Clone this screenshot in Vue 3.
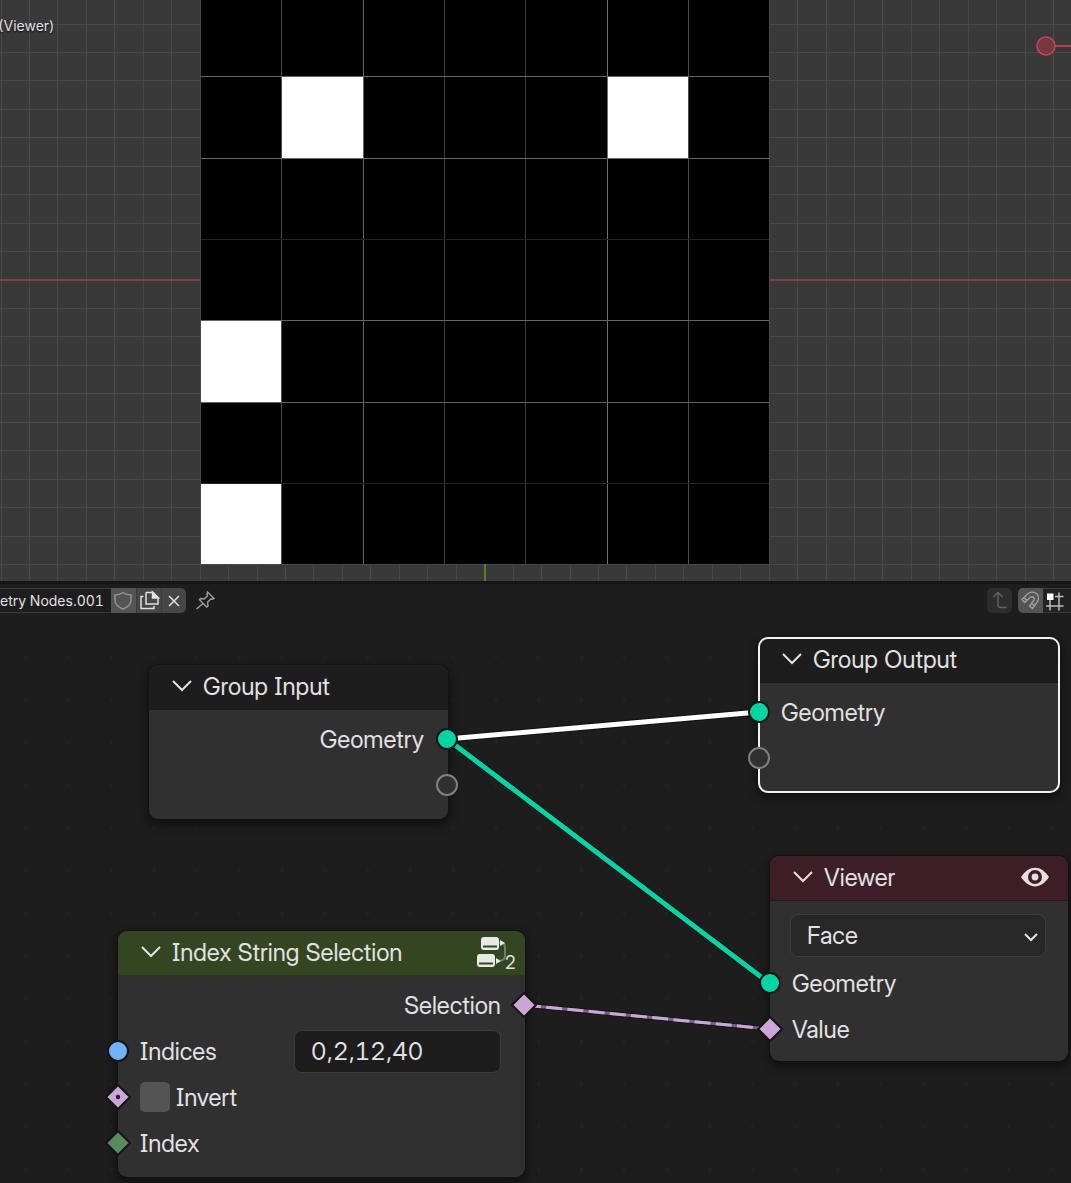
<script setup>
import { ref } from 'vue'

const treeName = ref('etry Nodes.001')
const indices = ref('0,2,12,40')
const invert = ref(false)
const domain = ref('Face')

const step = 28.45
const gridX = Array.from({ length: 70 }, (_, i) => 1 + (i - 16) * step)
const gridY = Array.from({ length: 21 }, (_, i) => 24 + i * step)

const cellX = [201, 282, 364, 445, 526, 608, 689, 769]
const cellY = [0, 77, 159, 240, 321, 403, 484, 565]
const columnLines = ['#4c4c4c', '#666', '#3c3c3c', '#3c3c3c', '#707070', '#4c4c4c']
const rowLines = ['#666', '#666', '#222', '#666', '#606060', '#222']
const selected = [[1, 1], [5, 1], [0, 4], [0, 6]]
</script>

<template>
  <main class="app">
    <section class="viewport" aria-label="3D viewport">
      <svg class="scene" viewBox="0 0 1071 581" preserveAspectRatio="xMidYMid slice" aria-hidden="true">
        <g stroke="#484848" stroke-width="1">
          <line v-for="x in gridX" :key="'x' + x" :x1="Math.floor(x) + 0.5" :x2="Math.floor(x) + 0.5" y1="0" y2="581" />
          <line v-for="y in gridY" :key="'y' + y" x1="-500" x2="1571" :y1="Math.floor(y) + 0.5" :y2="Math.floor(y) + 0.5" />
        </g>
        <path d="M-500 280H1571" stroke="#7c424a" stroke-width="2" />
        <path d="M485 560V581" stroke="#5f7c25" stroke-width="2" />
        <rect x="201" y="0" width="568" height="564" fill="#000" />
        <path v-for="(c, i) in columnLines" :key="'c' + i" :d="`M${cellX[i + 1] - 0.5} 0V564`" :stroke="c" />
        <path v-for="(c, i) in rowLines" :key="'r' + i" :d="`M201 ${cellY[i + 1] - 0.5}H769`" :stroke="c" />
        <rect
          v-for="[c, r] in selected" :key="c + '-' + r"
          :x="cellX[c]" :y="cellY[r]"
          :width="cellX[c + 1] - cellX[c] - 1" :height="cellY[r + 1] - cellY[r] - 1" fill="#fff"
        />
        <path d="M1055 46H1571" stroke="#b83f52" stroke-width="2" />
        <circle cx="1046" cy="46" r="9" fill="#743841" stroke="#c14356" stroke-width="1.6" />
      </svg>
      <p class="overlay">(Viewer)</p>
    </section>

    <section class="editor" aria-label="Node editor">
      <header class="toolbar">
        <div class="group">
          <input v-model="treeName" class="tree-name" aria-label="Node tree name" />
          <button class="tool" aria-label="Fake user">
            <svg viewBox="0 0 24 24"><path d="M12 4.500C9.500 6.500 7 7 4 7v5c0 4 3 7 8 9 5-2 8-5 8-9V7c-3 0-5.500-.5-8-2.500z" stroke="#929292" /></svg>
          </button>
          <button class="tool dim" aria-label="New node tree">
            <svg viewBox="0 0 24 24"><path d="M9 4.500h7l5 5v6.500H9V4.500" /><path d="M15.500 4v6h6z" fill="#e6e6e6" /><path d="M6.500 8.500H4V20.500h13v-2.500" /></svg>
          </button>
          <button class="tool dim last" aria-label="Unlink node tree">
            <svg viewBox="0 0 24 24"><path d="M7 8l10 10M17 8l-10 10" /></svg>
          </button>
        </div>
        <button class="bare" aria-label="Pin">
          <svg viewBox="0 0 24 24"><path d="M14.500 4l6.500 6.500-2 .8-1.200-.3-3.300 3.300.5 3.700-1.300 1L6.500 11.800l1-1.300 3.700.5 3.300-3.300-.5-1.700zM10 15.500L3.500 21" stroke="#a0a0a0" stroke-width="1.400" /></svg>
        </button>
        <div class="spacer"></div>
        <button class="parent" aria-label="Parent node tree">
          <svg viewBox="0 0 24 24"><path d="M6.500 9L11 4.500 15.500 9M11 5v11.500q0 3 3 3h5.500" stroke="#646464" stroke-width="1.400" /></svg>
        </button>
        <div class="group snap">
          <button class="tool first" aria-label="Snap">
            <svg viewBox="0 0 24 24"><path d="M4 11.500L9.500 6C13 2.500 20 4 20.500 10c0 2-.8 3.500-2 5l-4 5.500-3-2.500 4-5c2-2.500-.5-5.500-3.500-3.500L6.500 14.500zM6 9.500l2.800 3M13.500 15.500l3 2.300" stroke="#a2a2a2" stroke-width="1.300" /></svg>
          </button>
          <button class="snap-to" aria-label="Snap to grid">
            <svg viewBox="0 0 24 24"><path d="M7 11v10.500M16 3.500v18M12 7.500h8.500M3 17h17.500" stroke="#bcbcbc" stroke-width="1.500" /><path d="M4 4.500h6.500V11H4z" fill="#fff" stroke="none" /></svg>
          </button>
        </div>
      </header>

      <svg class="links" aria-hidden="true">
        <defs>
          <pattern id="dots" x="5" y="30" width="42.700" height="42.700" patternUnits="userSpaceOnUse">
            <circle cx="21.300" cy="3.300" r="1.200" fill="#242424" />
          </pattern>
        </defs>
        <rect y="40" width="100%" height="100%" fill="url(#dots)" />
        <g fill="none">
          <path d="M447 158L759 131" stroke="#111" stroke-width="7" />
          <path d="M447 158L759 131" stroke="#fff" stroke-width="5" />
          <path d="M447 158L769 402" stroke="#111" stroke-width="7" />
          <path d="M447 158L769 402" stroke="#00d6a3" stroke-width="5" />
          <path d="M524 424L769 448" stroke="#151515" stroke-width="5" />
          <path d="M524 424L769 448" stroke="#76637a" stroke-width="3" />
          <path d="M524 424L769 448" stroke="#cca6d8" stroke-width="3" stroke-dasharray="16 5.300" stroke-dashoffset="-1" />
        </g>
      </svg>

      <article class="node input-node">
        <h2><svg class="chev" viewBox="0 0 20 12"><path d="M1 1l9 9 9-9" /></svg>Group Input</h2>
        <div class="rows">
          <div class="row out">Geometry<svg class="sock" viewBox="-13 -13 26 26"><circle class="geo" r="10" /></svg></div>
          <div class="row out"><svg class="sock" viewBox="-13 -13 26 26"><circle class="empty" r="10" /></svg></div>
        </div>
      </article>

      <article class="node output-node">
        <h2><svg class="chev" viewBox="0 0 20 12"><path d="M1 1l9 9 9-9" /></svg>Group Output</h2>
        <div class="rows">
          <div class="row"><svg class="sock" viewBox="-13 -13 26 26"><circle class="geo" r="10" /></svg>Geometry</div>
          <div class="row"><svg class="sock" viewBox="-13 -13 26 26"><circle class="empty" r="10" /></svg></div>
        </div>
      </article>

      <article class="node viewer-node">
        <h2>
          <svg class="chev" viewBox="0 0 20 12"><path d="M1 1l9 9 9-9" /></svg>Viewer
          <svg class="eye" viewBox="0 0 28 20"><path d="M0 10C8-2.500 20-2.500 28 10 20 22.500 8 22.500 0 10z" fill="#e6dfe1" /><circle cx="14" cy="10" r="7" fill="#3d1e29" /><circle cx="14" cy="10" r="3.400" fill="#e6dfe1" /></svg>
        </h2>
        <div class="rows">
          <div class="select-wrap">
            <select v-model="domain" aria-label="Domain"><option>Face</option></select>
            <svg class="caret" viewBox="0 0 16 10"><path d="M2 2l6 6 6-6" /></svg>
          </div>
          <div class="row"><svg class="sock" viewBox="-13 -13 26 26"><circle class="geo" r="10" /></svg>Geometry</div>
          <div class="row"><svg class="sock" viewBox="-13 -13 26 26"><path class="bool" d="M0-12L12 0 0 12-12 0z" /></svg>Value</div>
        </div>
      </article>

      <article class="node index-node">
        <h2>
          <svg class="chev" viewBox="0 0 20 12"><path d="M1 1l9 9 9-9" /></svg>Index String Selection
          <span class="users">
            <svg viewBox="0 0 32 32">
              <path d="M23 6.500h3q3 1 3 5v8q0 5-5 5" fill="none" stroke="#71805f" stroke-width="2" />
              <rect x="5" y="1" width="18" height="13" rx="3" fill="#e8eae5" /><path d="M7 10.500h14" stroke="#34451f" stroke-width="2" />
              <rect x="1" y="18" width="18" height="13" rx="3" fill="#e8eae5" /><path d="M3 27.500h14" stroke="#34451f" stroke-width="2" />
              <path d="M24 4l5 3-5 3zM20 22l5 3-5 3z" fill="#e8eae5" />
            </svg>
            <span class="count">2</span>
          </span>
        </h2>
        <div class="rows">
          <div class="row out">Selection<svg class="sock" viewBox="-13 -13 26 26"><path class="bool" d="M0-12L12 0 0 12-12 0z" /></svg></div>
          <div class="row">
            <svg class="sock" viewBox="-13 -13 26 26"><circle class="str" r="10" /></svg>
            <label for="indices">Indices</label>
            <input id="indices" v-model="indices" class="field" />
          </div>
          <div class="row">
            <svg class="sock" viewBox="-13 -13 26 26"><path class="bool" d="M0-12L12 0 0 12-12 0z" /><circle r="2.200" fill="#2a1730" stroke="none" /></svg>
            <input id="invert" v-model="invert" type="checkbox" class="check" />
            <label for="invert">Invert</label>
          </div>
          <div class="row"><svg class="sock" viewBox="-13 -13 26 26"><path class="int" d="M0-12L12 0 0 12-12 0z" /></svg>Index</div>
        </div>
      </article>
    </section>
  </main>
</template>

<style>
body { margin: 0; background: #1d1d1d; }
</style>

<style scoped>
* { box-sizing: border-box; }
.app {
  display: flex;
  flex-direction: column;
  min-height: 100vh;
  color: #e2e2e2;
  font-family: "Inter Display", Inter, "Liberation Sans", sans-serif;
  font-size: 24px;
  font-feature-settings: "cv08", "tnum";
  overflow: hidden;
}
.viewport { position: relative; flex: 1 1 320px; background: #393939; overflow: hidden; }
.scene { position: absolute; inset: 0; width: 100%; height: 100%; }
.overlay {
  position: absolute;
  top: 16px;
  left: -2px;
  margin: 0;
  font-family: Inter, "Liberation Sans", sans-serif;
  font-size: 14px;
  line-height: 20px;
  text-shadow: 0 1px 2px #000;
}
.editor { position: relative; flex: 0 0 602px; background: #1d1d1d; border-top: 3px solid #161616; }
button, input, select { font: inherit; font-feature-settings: inherit; color: inherit; margin: 0; padding: 0; }
button { border: 0; background: none; display: grid; place-items: start; }
.toolbar {
  position: relative;
  z-index: 1;
  display: flex;
  padding-top: 4px;
  height: 33px;
  font-family: Inter, "Liberation Sans", sans-serif;
  font-size: 14px;
}
.toolbar svg { width: 24px; height: 24px; fill: none; stroke: #e0e0e0; stroke-width: 1.500; }
.group { display: flex; height: 25px; }
.tree-name { width: 111px; border: 1px solid #3a3a3a; border-width: 1px 0; background: #1d1d1d; }
.tool { width: 25px; height: 25px; background: #545454; }
.tool.dim { background: #464646; border-left: 1px solid #3c3c3c; }
.tool.last { border-radius: 0 5px 5px 0; }
.tool.first { border-radius: 5px 0 0 5px; }
.bare { width: 25px; height: 25px; margin-left: 7px; }
.spacer { flex: 1; }
.parent { width: 25px; height: 25px; border-radius: 5px; background: #2d2d2d; }
.snap { margin-left: 6px; }
.snap-to { width: 28px; border: 1px solid #3a3a3a; border-width: 1px 0; background: #222; }
.links { position: absolute; top: -3px; left: 0; width: 100%; height: 100%; }
.node {
  position: absolute;
  border-radius: 9px;
  background: #303030;
  box-shadow: 0 0 0 1px #131313, 0 4px 10px 2px rgba(0, 0, 0, .45);
}
h2 {
  display: flex;
  align-items: center;
  height: 45px;
  margin: 0;
  padding: 0 0 2px 23px;
  border-bottom: 1px solid #191919;
  border-radius: 9px 9px 0 0;
  background: #1d1d1d;
  font-size: 24px;
  font-weight: 400;
}
.chev { width: 20px; height: 12px; margin-right: 11px; fill: none; stroke: currentColor; stroke-width: 2; }
.rows { padding: 6px 0 11px; }
.row { position: relative; display: flex; align-items: center; height: 46px; padding: 0 24px 0 22px; }
.row.out { justify-content: flex-end; }
.sock { position: absolute; left: -13px; top: 10px; width: 26px; height: 26px; stroke: #151515; stroke-width: 2; }
.out .sock { left: auto; right: -12px; }
.geo { fill: #00d6a3; }
.str { fill: #70b2ff; }
.bool { fill: #cca6d6; }
.int { fill: #598c5c; }
.empty { fill: #303030; stroke: #808080; }
.input-node { left: 149px; top: 81px; width: 299px; }
.output-node { left: 759px; top: 54px; width: 300px; outline: 2px solid #f2f2f2; outline-offset: -1px; }
.viewer-node { left: 770px; top: 272px; width: 298px; }
.viewer-node h2 { background: #3d1e26; border-color: #2b171d; }
.index-node { left: 118px; top: 347px; width: 407px; }
.index-node h2 { background: #344621; border-color: #2a381c; }
.eye { width: 28px; height: 20px; margin: 0 19px 0 auto; }
.viewer-node .rows { padding-bottom: 9px; }
.select-wrap { position: relative; margin: 7px 22px 3px 20px; }
select {
  display: block;
  width: 100%;
  height: 43px;
  padding: 0 16px;
  appearance: none;
  border: 1px solid #3c3c3c;
  border-radius: 8px;
  background: #282828;
}
.caret { position: absolute; right: 7px; top: 18px; width: 16px; height: 10px; fill: none; stroke: #e6e6e6; stroke-width: 2; pointer-events: none; }
.field { width: 207px; height: 43px; margin-left: auto; padding: 0 16px; border: 1px solid #3c3c3c; border-radius: 8px; background: #1d1d1d; }
.check { width: 30px; height: 30px; margin-right: 6px; appearance: none; border-radius: 5px; background: #545454; }
.users { position: relative; width: 40px; height: 32px; margin: 0 9px 0 auto; }
.users svg { display: block; width: 32px; height: 32px; }
.count { position: absolute; right: 0; bottom: -6px; font-size: 18px; line-height: 22px; }
</style>
